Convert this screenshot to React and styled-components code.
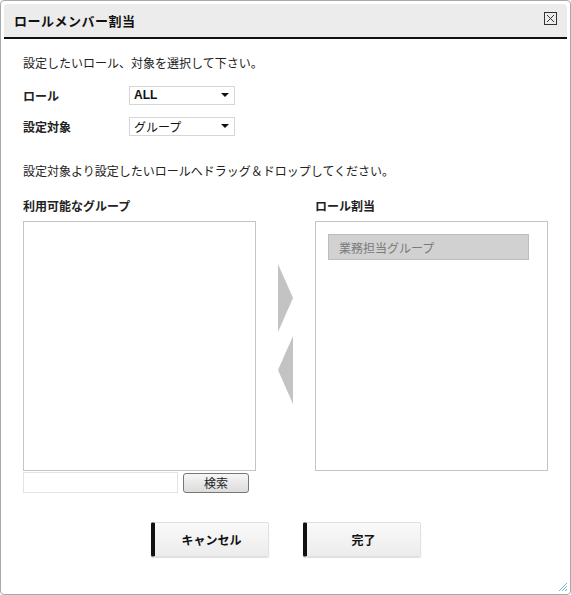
import styled, { createGlobalStyle } from "styled-components";

const Global = createGlobalStyle`
  html, body { margin: 0; padding: 0; background: #fff; }
  body {
    font-family: "Noto Sans CJK JP", "Liberation Sans", sans-serif;
    font-size: 12px;
    color: #222;
  }
`;

const Dialog = styled.div`
  box-sizing: border-box;
  width: 571px;
  height: 595px;
  border: 1px solid #a9a9a9;
  border-radius: 4px;
  padding: 3px;
  display: flex;
  flex-direction: column;
  position: relative;
`;

const Header = styled.div`
  height: 33px;
  background: #ececec;
  border-radius: 4px 4px 0 0;
  border-bottom: 2px solid #111;
  display: flex;
  align-items: center;
  justify-content: space-between;
  padding: 0 10px 0 10px;
`;

const Title = styled.h1`
  margin: 0;
  font-size: 13px;
  font-weight: bold;
  color: #111;
  letter-spacing: 0.5px;
`;

const Close = styled.div`
  width: 11px;
  height: 11px;
  border: 1px solid #333;
  display: flex;
  align-items: center;
  justify-content: center;
  margin-bottom: 4px;
`;

const Body = styled.div`
  padding: 15px 19px 0 19px;
  flex: 1;
  display: flex;
  flex-direction: column;
`;

const Note = styled.p`
  margin: 0;
  margin-top: ${(p) => p.mt || 0}px;
  font-size: 12px;
  line-height: 18px;
`;

const Field = styled.div`
  display: flex;
  align-items: center;
  height: 18px;
  margin-top: ${(p) => p.mt}px;
`;

const Label = styled.div`
  width: 106px;
  font-weight: bold;
  font-size: 12px;
`;

const Select = styled.div`
  box-sizing: border-box;
  width: 106px;
  height: 19px;
  border: 1px solid #d6d6d6;
  display: flex;
  align-items: center;
  justify-content: space-between;
  padding: 0 5px 0 4px;
  font-size: 12px;
  font-family: ${(p) => (p.latin ? '"Liberation Sans", sans-serif' : "inherit")};
  font-weight: ${(p) => (p.latin ? "bold" : "normal")};
  color: #111;
`;

const Caret = styled.span`
  width: 0;
  height: 0;
  border-left: 4px solid transparent;
  border-right: 4px solid transparent;
  border-top: 4px solid #111;
`;

const Columns = styled.div`
  display: flex;
  margin-top: 17px;
`;

const Column = styled.div`
  width: 234px;
  display: flex;
  flex-direction: column;
`;

const ColTitle = styled.div`
  font-weight: bold;
  font-size: 12px;
  line-height: 18px;
  margin-bottom: 6px;
`;

const ListBox = styled.div`
  box-sizing: border-box;
  height: 250px;
  border: 1px solid #c4c4c4;
  padding: 12px 18px 0 12px;
`;

const Item = styled.div`
  box-sizing: border-box;
  height: 26px;
  background: #d1d1d1;
  border: 1px solid #bdbdbd;
  color: #7a7a7a;
  font-size: 12px;
  display: flex;
  align-items: center;
  padding-left: 10px;
`;

const Arrows = styled.div`
  width: 59px;
  padding-top: 67px;
  display: flex;
  flex-direction: column;
  align-items: center;
  gap: 4px;
`;

const SearchRow = styled.div`
  display: flex;
  align-items: center;
  gap: 5px;
  margin-top: 1px;
`;

const SearchInput = styled.div`
  box-sizing: border-box;
  width: 155px;
  height: 21px;
  border: 1px solid #dfe3ea;
`;

const SearchButton = styled.div`
  box-sizing: border-box;
  width: 66px;
  height: 20px;
  border: 1px solid #777;
  border-radius: 3px;
  background: linear-gradient(#f6f6f6, #dcdcdc);
  display: flex;
  align-items: center;
  justify-content: center;
  font-size: 12px;
  color: #222;
`;

const Footer = styled.div`
  display: flex;
  justify-content: center;
  gap: 34px;
  margin-top: 29px;
  padding-left: 1px;
`;

const ActionButton = styled.div`
  box-sizing: border-box;
  width: 118px;
  height: 35px;
  border: 1px solid #e0e0e0;
  border-left: 4px solid #111;
  border-radius: 2px;
  background: linear-gradient(#fafafa, #ececec);
  display: flex;
  align-items: center;
  justify-content: center;
  font-weight: bold;
  font-size: 12px;
  color: #111;
  box-shadow: 0 1px 1px #ddd;
`;

const Grip = styled.svg`
  position: absolute;
  right: 2px;
  bottom: 2px;
`;

function Arrow({ dir }) {
  return (
    <svg width="15" height="68" viewBox="0 0 15 68">
      {dir === "right" ? (
        <polygon points="0,0 15,34 0,68" fill="#c3c3c3" />
      ) : (
        <polygon points="15,0 0,34 15,68" fill="#c3c3c3" />
      )}
    </svg>
  );
}

export default function App() {
  return (
    <>
      <Global />
      <Dialog>
        <Header>
          <Title>ロールメンバー割当</Title>
          <Close>
            <svg width="9" height="9" viewBox="0 0 9 9">
              <path d="M1 1 L8 8 M8 1 L1 8" stroke="#333" strokeWidth="1" />
            </svg>
          </Close>
        </Header>
        <Body>
          <Note>設定したいロール、対象を選択して下さい。</Note>
          <Field mt={14}>
            <Label>ロール</Label>
            <Select latin>
              ALL
              <Caret />
            </Select>
          </Field>
          <Field mt={13}>
            <Label>設定対象</Label>
            <Select>
              グループ
              <Caret />
            </Select>
          </Field>
          <Note mt={27}>
            設定対象より設定したいロールへドラッグ＆ドロップしてください。
          </Note>
          <Columns>
            <Column>
              <ColTitle>利用可能なグループ</ColTitle>
              <ListBox />
              <SearchRow>
                <SearchInput />
                <SearchButton>検索</SearchButton>
              </SearchRow>
            </Column>
            <Arrows>
              <Arrow dir="right" />
              <Arrow dir="left" />
            </Arrows>
            <Column>
              <ColTitle>ロール割当</ColTitle>
              <ListBox>
                <Item>業務担当グループ</Item>
              </ListBox>
            </Column>
          </Columns>
          <Footer>
            <ActionButton>キャンセル</ActionButton>
            <ActionButton>完了</ActionButton>
          </Footer>
        </Body>
        <Grip width="10" height="10" viewBox="0 0 10 10">
          <path d="M9 1 L1 9 M9 4 L4 9 M9 7 L7 9" stroke="#6ab3e0" strokeWidth="1" />
        </Grip>
      </Dialog>
    </>
  );
}
